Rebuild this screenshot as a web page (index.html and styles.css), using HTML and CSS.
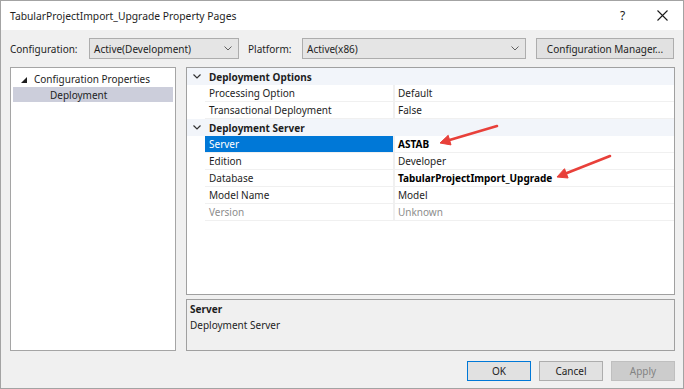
FILE: index.html
```html
<!DOCTYPE html>
<html lang="en">
<head>
	<meta charset="UTF-8">
	<title>TabularProjectImport_Upgrade Property Pages</title>
	<link rel="stylesheet" href="styles.css">
</head>
<body>
	<div class="window">
		<div class="titlebar">
			<span class="title">TabularProjectImport_Upgrade Property Pages</span>
			<span class="help">?</span>
			<span class="close">
				<svg width="11" height="11" viewBox="0 0 11 11"><path d="M0.5 0.5 L10.5 10.5 M10.5 0.5 L0.5 10.5" stroke="#1a1a1a" stroke-width="1.1" fill="none"/></svg>
			</span>
		</div>
		<div class="body">
			<div class="configbar">
				<span class="lbl">Configuration:</span>
				<div class="combo combo-config">
					<span>Active(Development)</span>
					<svg width="8" height="5" viewBox="0 0 8 5"><polyline points="0.5,0.5 4,4 7.5,0.5" stroke="#606060" fill="none"/></svg>
				</div>
				<span class="lbl lbl-platform">Platform:</span>
				<div class="combo combo-platform">
					<span>Active(x86)</span>
					<svg width="8" height="5" viewBox="0 0 8 5"><polyline points="0.5,0.5 4,4 7.5,0.5" stroke="#606060" fill="none"/></svg>
				</div>
				<a href="javascript:;" class="btn btn-manager">Configuration Manager...</a>
			</div>

			<div class="main">
				<div class="tree">
					<div class="tree-item">
						<svg class="tri" width="6" height="6" viewBox="0 0 6 6"><polygon points="6,0 6,6 0,6" fill="#1e1e1e"/></svg>
						<span>Configuration Properties</span>
					</div>
					<div class="tree-item child cur"><span>Deployment</span></div>
				</div>

				<div class="right">
					<div class="grid">
						<div class="row cat">
							<span class="gut"><svg width="8" height="5" viewBox="0 0 8 5"><polyline points="0.5,0.5 4,4 7.5,0.5" stroke="#333" stroke-width="1.2" fill="none"/></svg></span>
							<span class="cat-name">Deployment Options</span>
						</div>
						<div class="row">
							<span class="gut"></span>
							<span class="name">Processing Option</span>
							<span class="val">Default</span>
						</div>
						<div class="row">
							<span class="gut"></span>
							<span class="name">Transactional Deployment</span>
							<span class="val">False</span>
						</div>
						<div class="row cat">
							<span class="gut"><svg width="8" height="5" viewBox="0 0 8 5"><polyline points="0.5,0.5 4,4 7.5,0.5" stroke="#333" stroke-width="1.2" fill="none"/></svg></span>
							<span class="cat-name">Deployment Server</span>
						</div>
						<div class="row sel">
							<span class="gut"></span>
							<span class="name">Server</span>
							<span class="val bold">ASTAB</span>
						</div>
						<div class="row">
							<span class="gut"></span>
							<span class="name">Edition</span>
							<span class="val">Developer</span>
						</div>
						<div class="row">
							<span class="gut"></span>
							<span class="name">Database</span>
							<span class="val bold">TabularProjectImport_Upgrade</span>
						</div>
						<div class="row">
							<span class="gut"></span>
							<span class="name">Model Name</span>
							<span class="val">Model</span>
						</div>
						<div class="row off">
							<span class="gut"></span>
							<span class="name">Version</span>
							<span class="val">Unknown</span>
						</div>
					</div>
					<div class="desc">
						<div class="desc-title">Server</div>
						<div class="desc-text">Deployment Server</div>
					</div>
				</div>
			</div>

			<div class="buttons">
				<a href="javascript:;" class="btn btn-ok">OK</a>
				<a href="javascript:;" class="btn">Cancel</a>
				<a href="javascript:;" class="btn disabled">Apply</a>
			</div>
		</div>

		<!-- annotation arrows -->
		<svg class="arrows" width="684" height="389" viewBox="0 0 684 389">
			<g fill="#e8403a" stroke="#e8403a">
				<line x1="497" y1="126" x2="449.6" y2="140.1" stroke-width="2.6" stroke-linecap="round"/>
				<polygon points="440,143 451,144.9 448.2,135.3" stroke-width="1" stroke-linejoin="round"/>
				<line x1="610" y1="156" x2="566.3" y2="173.3" stroke-width="2.6" stroke-linecap="round"/>
				<polygon points="557,177 568.1,178 564.5,168.7" stroke-width="1" stroke-linejoin="round"/>
			</g>
		</svg>
	</div>
</body>
</html>
```

FILE: styles.css
```css
*{
	margin: 0;
	padding: 0;
	box-sizing: border-box;
}
body{
	font-family: "Noto Sans", "Liberation Sans", sans-serif;
	font-size: 10px;
	color: #1e1e1e;
	background: #fff;
}
.window{
	width: 684px;
	height: 389px;
	border: 1px solid #a3a3a3;
	background: #f0f0f0;
	position: relative;
	display: flex;
	flex-direction: column;
}
.titlebar{
	height: 29px;
	background: #fff;
	display: flex;
	align-items: center;
	padding-left: 9px;
}
.titlebar .title{
	flex: 1;
	font-size: 10.3px;
}
.titlebar .help{
	font-size: 12px;
	width: 12px;
	margin-right: 25px;
	color: #1a1a1a;
}
.titlebar .close{
	width: 11px;
	height: 11px;
	margin-right: 15px;
	display: flex;
}
.body{
	flex: 1;
	padding: 8px 8px 0 9px;
	display: flex;
	flex-direction: column;
}
.configbar{
	display: flex;
	align-items: center;
	height: 21px;
}
.lbl{
	width: 79px;
}
.lbl-platform{
	width: 54px;
	margin-left: 9px;
}
.combo{
	height: 21px;
	background: #e5e5e5;
	border: 1px solid #adadad;
	display: flex;
	align-items: center;
	justify-content: space-between;
	padding: 0 6px 0 4px;
}
.combo-config{
	width: 150px;
}
.combo-platform{
	width: 224px;
}
.btn{
	height: 21px;
	background: #e1e1e1;
	border: 1px solid #adadad;
	color: #1e1e1e;
	text-decoration: none;
	display: flex;
	align-items: center;
	justify-content: center;
}
.btn-manager{
	width: 138px;
	margin-left: 10px;
}
.main{
	margin-top: 8px;
	height: 284px;
	display: flex;
	gap: 10px;
}
.tree{
	width: 166px;
	background: #fff;
	border: 1px solid #a5a5a5;
	padding: 3px 2px 1px;
}
.tree-item{
	height: 16px;
	display: flex;
	align-items: center;
	padding-left: 8px;
}
.tree-item .tri{
	margin-right: 7px;
	margin-top: 1px;
}
.tree-item.child{
	height: 15px;
	padding-left: 37px;
}
.tree-item.cur{
	background: #cccedb;
}
.right{
	flex: 1;
	display: flex;
	flex-direction: column;
	gap: 4px;
}
.grid{
	height: 228px;
	background: #fff;
	border: 1px solid #a0a0a0;
}
.row{
	display: grid;
	grid-template-columns: 18px 190px 1fr;
	height: 17px;
}
.row span{
	display: flex;
	align-items: center;
	white-space: nowrap;
}
.row .gut{
	justify-content: center;
	padding-left: 2px;
}
.row .name,
.row .val{
	border-bottom: 1px solid #f0f0f0;
	padding-left: 4px;
}
.row .name{
	border-right: 2px solid #f0f0f0;
}
.row .val{
	padding-left: 3px;
}
.row.cat{
	background: #f2f5fa;
	grid-template-columns: 18px 1fr;
}
.row .cat-name{
	font-weight: bold;
	padding-left: 4px;
}
.row.sel .name{
	background: #0078d7;
	color: #fff;
}
.row .val.bold{
	font-weight: bold;
	color: #000;
}
.row.off .name,
.row.off .val{
	color: #8d8d8d;
}
.desc{
	flex: 1;
	border: 1px solid #a0a0a0;
	padding: 1px 3px;
	line-height: 16px;
}
.desc-title{
	font-weight: bold;
}
.buttons{
	margin-top: 10px;
	display: flex;
	justify-content: flex-end;
	gap: 8px;
}
.buttons .btn{
	width: 64px;
	height: 20px;
}
.buttons .btn-ok{
	border-color: #0078d7;
}
.buttons .btn.disabled{
	background: #cccccc;
	border-color: #bfbfbf;
	color: #838383;
}
.arrows{
	position: absolute;
	top: -1px;
	left: -1px;
	pointer-events: none;
}
```
